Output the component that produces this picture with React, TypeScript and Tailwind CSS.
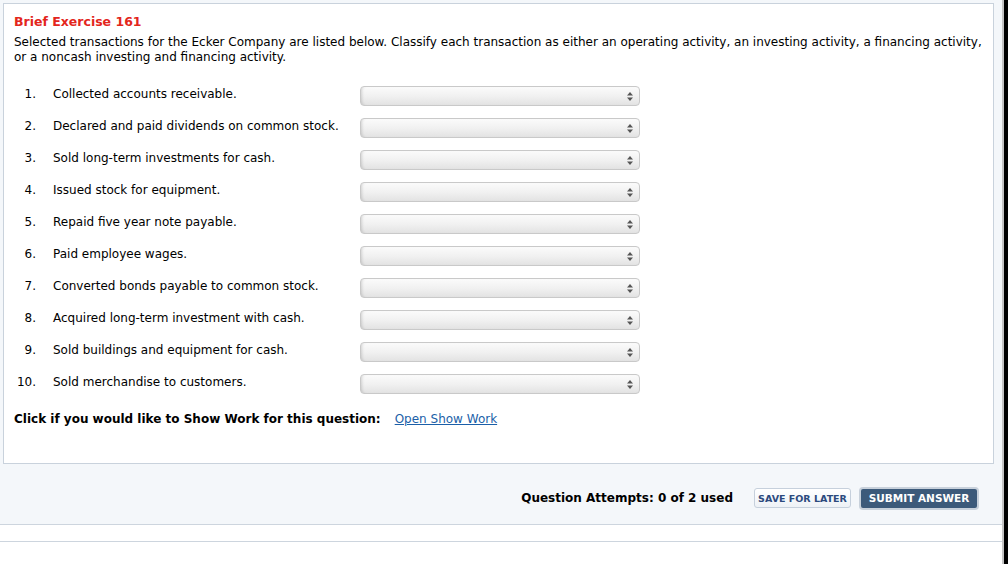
const items = [
  "Collected accounts receivable.",
  "Declared and paid dividends on common stock.",
  "Sold long-term investments for cash.",
  "Issued stock for equipment.",
  "Repaid five year note payable.",
  "Paid employee wages.",
  "Converted bonds payable to common stock.",
  "Acquired long-term investment with cash.",
  "Sold buildings and equipment for cash.",
  "Sold merchandise to customers.",
];

function SelectBox() {
  return (
    <div className="relative w-[280px] h-[20px] rounded-[4px] border border-[#c9c9c9] bg-gradient-to-b from-[#fbfbfb] via-[#f1f1f1] to-[#e3e3e3] shadow-[inset_3px_0_3px_-2px_rgba(0,0,0,0.15)]">
      <svg className="absolute right-[6px] top-[5px]" width="6" height="9" viewBox="0 0 6 9">
        <path d="M3 0 L6 3.5 L0 3.5 Z" fill="#555" />
        <path d="M0 5.5 L6 5.5 L3 9 Z" fill="#555" />
      </svg>
    </div>
  );
}

export default function App() {
  return (
    <div
      className="flex w-[1008px] h-[564px] overflow-hidden bg-white text-[12px] leading-[15px] text-black"
      style={{ fontFamily: '"DejaVu Sans", Verdana, sans-serif' }}
    >
      <div className="flex flex-col w-[1002px]">
        <div className="bg-[#f4f7fa] pt-[3px] pl-[3px]">
          <div className="w-[991px] h-[461px] border border-[#c9d2dc] bg-white pl-[10px] pt-[10px]">
            <h2 className="font-bold text-[#e3261c] text-[12.5px]">Brief Exercise 161</h2>
            <p className="mt-[6px] pr-[8px]">
              Selected transactions for the Ecker Company are listed below. Classify each transaction as either an
              operating activity, an investing activity, a financing activity, or a noncash investing and financing
              activity.
            </p>
            <div className="mt-[15px] flex flex-col">
              {items.map((text, i) => (
                <div key={i} className="flex items-center h-[32px]">
                  <div className="flex mb-[3px]">
                    <span className="w-[22px] text-right">{i + 1}.</span>
                    <span className="w-[324px] pl-[17px] whitespace-nowrap">{text}</span>
                  </div>
                  <SelectBox />
                </div>
              ))}
            </div>
            <div className="mt-[12px] flex items-center">
              <span className="font-bold">Click if you would like to Show Work for this question:</span>
              <a href="#" className="ml-[14px] text-[#1b5fa8] underline">
                Open Show Work
              </a>
            </div>
          </div>
        </div>
        <div className="flex items-center justify-end h-[61px] pt-[8px] pr-[23px] bg-[#f4f7fa] border-b border-[#cdd5de]">
          <span className="font-bold whitespace-nowrap">Question Attempts: 0 of 2 used</span>
          <button className="ml-[21px] w-[97px] h-[20px] rounded-[3px] border border-[#c6d0dc] bg-gradient-to-b from-white to-[#eef2f6] text-[9.5px] font-bold text-[#2c4a7e] whitespace-nowrap">
            SAVE FOR LATER
          </button>
          <button className="ml-[8px] w-[120px] h-[23px] rounded-[4px] border-2 border-[#c8d1db] bg-[#3c5a7a] text-[10.5px] font-bold text-white whitespace-nowrap">
            SUBMIT ANSWER
          </button>
        </div>
        <div className="h-[16px]" />
        <div className="border-t border-[#cdd5de]" />
      </div>
      <div className="w-[2px] bg-[#c4c4c4]" />
      <div className="w-[4px] bg-black" />
    </div>
  );
}
